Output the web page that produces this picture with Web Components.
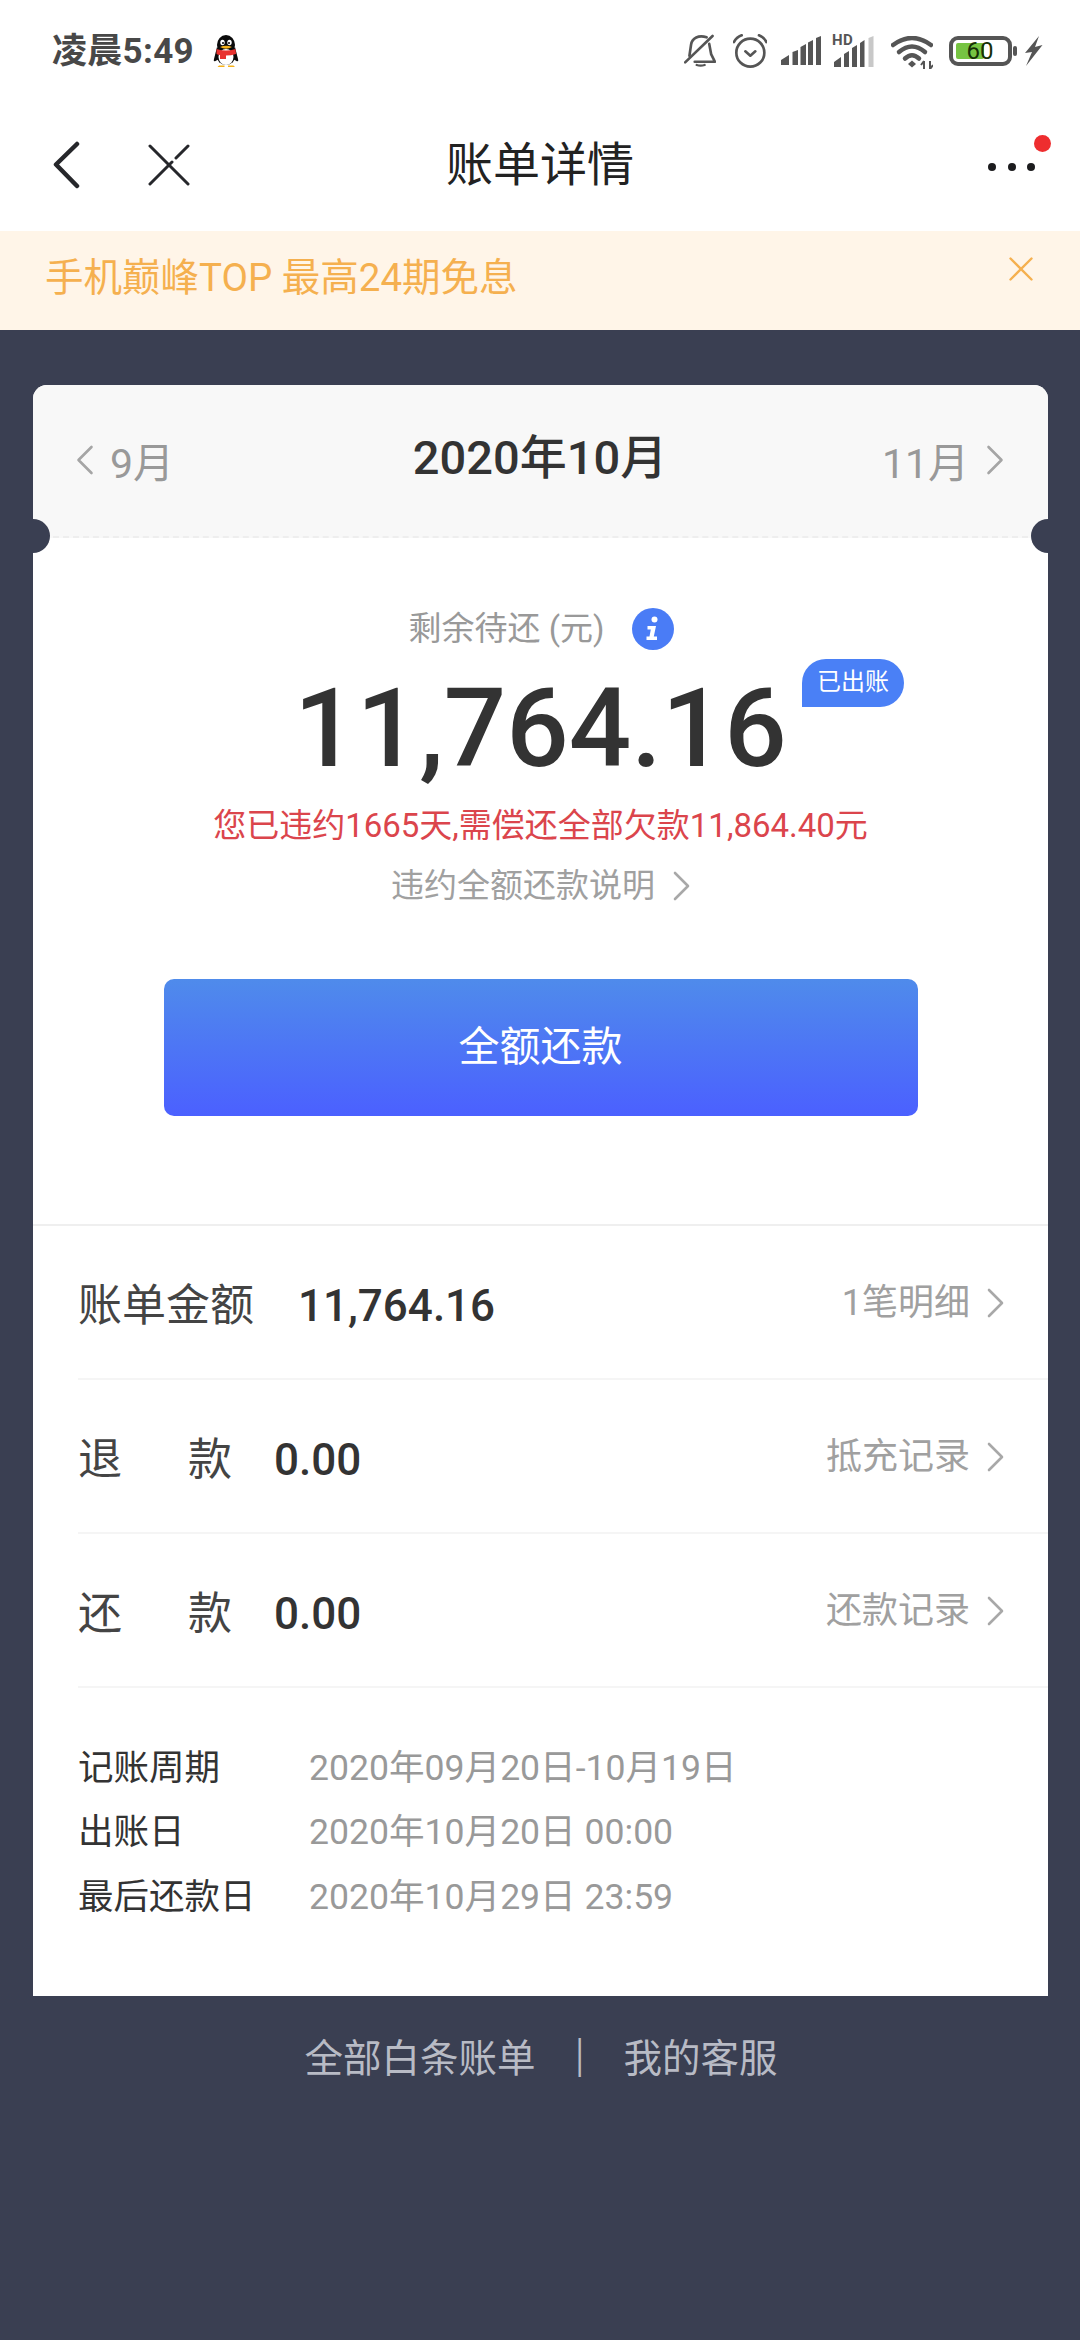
<!DOCTYPE html>
<html lang="zh-CN">
<head>
<meta charset="utf-8">
<title>账单详情</title>
<style>
html,body{margin:0;padding:0}
body{width:1080px;height:2340px;overflow:hidden;background:#3a3f52;font-family:Roboto,"Noto Sans CJK SC",sans-serif;color:#333;display:flex;flex-direction:column}
</style>
</head>
<body>
<status-bar></status-bar>
<nav-bar>账单详情</nav-bar>
<promo-banner>手机巅峰TOP 最高24期免息</promo-banner>
<bill-page>
  <bill-card>
    <month-header slot="header" prev="9月" next="11月">2020年10月</month-header>
    <amount-panel slot="summary"></amount-panel>
    <detail-row label-width="176" gap="44"><span slot="label">账单金额</span><span slot="value">11,764.16</span><span slot="link">1笔明细</span></detail-row>
    <detail-row label-width="154" gap="42"><span slot="label">退款</span><span slot="value">0.00</span><span slot="link">抵充记录</span></detail-row>
    <detail-row label-width="154" gap="42"><span slot="label">还款</span><span slot="value">0.00</span><span slot="link">还款记录</span></detail-row>
    <info-list slot="info">
      <info-row><span slot="label">记账周期</span>2020年09月20日-10月19日</info-row>
      <info-row><span slot="label">出账日</span>2020年10月20日 00:00</info-row>
      <info-row><span slot="label">最后还款日</span>2020年10月29日 23:59</info-row>
    </info-list>
  </bill-card>
  <footer-links></footer-links>
</bill-page>
<script>
function def(name, html, extra){
  const t=document.createElement('template');t.innerHTML=html;
  customElements.define(name,class extends HTMLElement{
    constructor(){super();this.attachShadow({mode:'open'}).appendChild(t.content.cloneNode(true));}
    connectedCallback(){if(extra)extra(this)}
  });
}
const CHEV=(d,w,h,c,sw)=>`<svg width="${w}" height="${h}" viewBox="0 0 17 30" style="display:block;flex:none" fill="none" stroke="${c}" stroke-width="${sw}" stroke-linecap="round" stroke-linejoin="round"><path d="${d==='l'?'M15 2 2 15 15 28':'M2 2 15 15 2 28'}"/></svg>`;

def('status-bar',`<style>
:host{display:flex;box-sizing:border-box;height:100px;background:#fff;align-items:flex-start;position:relative;color:#484848}
.time{margin:30px 0 0 52px;font-size:35px;line-height:44px;font-weight:700;letter-spacing:.3px;width:160px;white-space:nowrap}
.qq{margin:35px 0 0 1px;display:block}
.icons{margin-left:auto;margin-right:37px;display:flex;align-items:flex-start;padding-top:34px;height:36px}
svg{display:block;flex:none}
.hd{position:relative;width:42px;height:33px;margin-left:12px}
.hd b{position:absolute;left:-1px;top:-3px;font:700 15px/18px Roboto,sans-serif;color:#555;letter-spacing:.3px}
.hd svg{position:absolute;left:0;top:2px}
.bat{position:relative;width:68px;height:30px;margin:2px 0 0 16px}
.bat i{position:absolute;left:7px;top:7px;width:28px;height:16px;background:#76c442;border-radius:2px}
.bat span{position:absolute;left:16px;top:0;width:30px;text-align:center;font:400 24px/31px Roboto,sans-serif;color:#163006}
.bat svg{position:absolute;left:0;top:0}
</style>
<div class="time">凌晨5:49</div>
<svg class="qq" width="26" height="32" viewBox="0 0 26 32">
  <ellipse cx="13" cy="10" rx="9" ry="10" fill="#0b0b0b"/>
  <path d="M4 12 1 24Q0 27 2.500 26L6 24 8 18Z M22 12 25 24Q26 27 23.500 26L20 24 18 18Z" fill="#0b0b0b"/>
  <ellipse cx="13" cy="21" rx="9.500" ry="9" fill="#0b0b0b"/>
  <ellipse cx="13" cy="22" rx="7.500" ry="8" fill="#fff"/>
  <path d="M3.500 14Q13 17 22.500 14L23 19Q18 20.500 13 20.500V24H7V20Q5 19.800 3.500 19Z" fill="#e8322f"/>
  <ellipse cx="9.500" cy="7.500" rx="2.200" ry="2.800" fill="#fff"/><ellipse cx="16.500" cy="7.500" rx="2.200" ry="2.800" fill="#fff"/>
  <circle cx="10" cy="8" r="1" fill="#000"/><circle cx="16" cy="8" r="1" fill="#000"/>
  <path d="M7 12Q13 9.500 19 12Q13 15.500 7 12Z" fill="#f5b21a"/>
  <path d="M6 30.500h5.500v1.500H4.500ZM15 30.500h5.500L22 32h-7Z" fill="#f5b21a"/>
</svg>
<div class="icons">
  <svg width="32" height="33" viewBox="0 0 96 100" fill="none" stroke="#555" stroke-width="8" stroke-linecap="round" stroke-linejoin="round">
    <path d="M3 86 86 6"/>
    <path d="M16 66 21 32C24 12 44 2 68 10"/><path d="M76 30 82 62 93 84H32"/>
    <path d="M38 94Q50 98 62 94" stroke-width="7"/>
  </svg>
  <svg style="margin-left:17px" width="34" height="34" viewBox="0 0 102 102" fill="none" stroke="#555" stroke-width="8" stroke-linecap="round" stroke-linejoin="round">
    <circle cx="52" cy="56" r="42"/><path d="M37 52 52 65 67 52"/><path d="M3 24Q10 10 26 4"/><path d="M78 4Q94 10 100 24"/>
  </svg>
  <svg style="margin:2px 0 0 14px" width="40" height="29" viewBox="0 0 40 29" fill="#555">
    <path d="M0 29V24L8 19V29ZM11.500 29V16L17 14V29ZM19.500 29V11L25 8V29ZM27 29V6.500L32 4V29ZM35 29V2L40 0V29Z"/>
  </svg>
  <div class="hd"><b>HD</b>
    <svg width="42" height="31" viewBox="0 0 42 31" fill="#555">
      <path d="M1 31V26L8 21V31ZM11 31V18L16 15V31ZM19 31V12L24 9V31ZM27 31V7L31.500 4V31Z"/><path d="M35.500 31V2L40.500 0V31Z" fill="#c8c8c8"/>
    </svg>
  </div>
  <svg style="margin:2px 0 0 16px" width="42" height="33" viewBox="0 0 42 33" fill="none" stroke="#555" stroke-linecap="round">
    <path d="M2 9Q21 -5 40 9" stroke-width="4.500"/><path d="M8 16Q21 5 34 16" stroke-width="4.500"/><path d="M14 22.500Q21 16 28 22.500" stroke-width="4.500"/>
    <path d="M17 28 21 24.500 25 28 21 31.500Z" fill="#555" stroke="none"/>
    <path d="M33 25V33M33 25 30 29M39 25V33M39 33 42 29" stroke-width="2" stroke-linecap="butt"/>
  </svg>
  <div class="bat">
    <i></i><span>60</span>
    <svg width="68" height="30" viewBox="0 0 68 30" fill="none"><rect x="2" y="2" width="59" height="26" rx="7" stroke="#555" stroke-width="4"/><rect x="64" y="10" width="4" height="10" rx="2" fill="#555"/></svg>
  </div>
  <svg style="margin:2px 0 0 8px" width="18" height="30" viewBox="0 0 18 30" fill="#555"><path d="M14 0 0 17 7 16 1 30 17.500 9 10 11Z"/></svg>
</div>`);

def('nav-bar',`<style>
:host{display:grid;grid-template-columns:1fr auto 1fr;align-items:center;height:131px;background:#fff;box-sizing:border-box}
.l{display:flex;align-items:center;padding-left:52px;gap:68px;margin-top:-2px}
.t{font-size:47px;line-height:60px;color:#222;margin-top:-2px;letter-spacing:0}
.r{justify-self:end;position:relative;width:100px;height:60px;margin-top:-2px}
.r i{position:absolute;top:28px;width:8px;height:8px;border-radius:50%;background:#1c1c1e}
.r b{position:absolute;left:54px;top:0;width:17px;height:17px;border-radius:50%;background:#ee2d2f}
svg{display:block}
</style>
<div class="l">
<svg width="28" height="48" viewBox="0 0 28 48" fill="none" stroke="#26272b" stroke-width="4.500" stroke-linecap="round" stroke-linejoin="round"><path d="M25 3 4 23.500 25 45"/></svg>
<svg width="42" height="42" viewBox="0 0 42 42" fill="none" stroke="#26272b" stroke-width="3" stroke-linecap="round"><path d="M2 2 40 40"/><path d="M2 40 24 18"/><path d="M28 14 40 2"/></svg>
</div>
<div class="t"><slot></slot></div>
<div class="r"><i style="left:8px"></i><i style="left:28px"></i><i style="left:47px"></i><b></b></div>`);

def('promo-banner',`<style>
:host{display:flex;align-items:center;justify-content:space-between;height:99px;box-sizing:border-box;background:#fff5e8;padding:0 47px 0 45px;color:#f5b04f;font-size:38.500px;flex:none}
svg{display:block;margin-top:-24px}
div{margin-top:-5px;line-height:50px}
</style><div><slot></slot></div>
<svg width="24" height="24" viewBox="0 0 24 24" fill="none" stroke="#f5b04f" stroke-width="2.400" stroke-linecap="round"><path d="M1.500 1.500 22.500 22.500M22.500 1.500 1.500 22.500"/></svg>`);

def('bill-page',`<style>:host{display:flex;flex-direction:column;flex:1;padding:55px 32px 0 33px;box-sizing:border-box}</style><slot></slot>`);

def('bill-card',`<style>
:host{display:block;position:relative;height:1611px;background:#fff;border-radius:14px 14px 0 0;overflow:hidden}
.n{position:absolute;top:134px;width:34px;height:34px;border-radius:50%;background:#3a3f52;z-index:2}
</style>
<slot name="header"></slot><slot name="summary"></slot><slot></slot><slot name="info"></slot>
<i class="n" style="left:-17px"></i><i class="n" style="right:-17px"></i>`);

def('month-header',`<style>
:host{display:grid;grid-template-columns:1fr auto 1fr;align-items:center;height:153px;box-sizing:border-box;background:#f8f8f8;border-bottom:2px dashed #eeeeee;padding:0 44px 0 43px;color:#999;font-size:41px}
.s{display:flex;align-items:center;gap:16px;margin-top:-1px}
.s.e{justify-content:flex-end;gap:17px}
.m{font-size:47px;font-weight:500;color:#333;line-height:60px;margin-top:-5px}
</style>
<div class="s">${CHEV('l',18,30,'#a5a5a5',2.6)}<span id="p"></span></div>
<div class="m"><slot></slot></div>
<div class="s e"><span id="n"></span>${CHEV('r',18,30,'#a5a5a5',2.6)}</div>`,
el=>{el.shadowRoot.getElementById('p').textContent=el.getAttribute('prev');el.shadowRoot.getElementById('n').textContent=el.getAttribute('next');});

def('amount-panel',`<style>
:host{display:flex;flex-direction:column;align-items:center;height:688px;box-sizing:border-box;padding-top:67px;border-bottom:2px solid #efefef}
.lb{display:flex;align-items:center;gap:28px;height:48px;font-size:33px;color:#999;line-height:48px;margin-left:2px}
.ic{width:42px;height:42px;display:block;flex:none}
.amt{position:relative;margin-top:16px;font-size:110px;line-height:120px;font-weight:500;color:#333}
.bd{position:absolute;left:calc(100% + 15px);top:-10px;width:102px;height:48px;border-radius:24px 24px 24px 0;background:#4a80f6;color:#fff;font-size:24px;line-height:46px;text-align:center;font-weight:400}
.warn{margin-top:15px;font-size:33px;line-height:44px;color:#db454c;white-space:nowrap}
.lnk{margin-top:16px;display:flex;align-items:center;gap:18px;font-size:33px;line-height:44px;color:#a0a0a0}
.btn{margin-top:71px;width:754px;height:137px;border-radius:10px;background:linear-gradient(180deg,#4f8beb,#4b60ff);color:#fff;font-size:41px;display:flex;align-items:center;justify-content:center;padding-bottom:10px;box-sizing:border-box}
</style>
<div class="lb"><span>剩余待还 (元)</span>
<svg class="ic" viewBox="0 0 42 42"><circle cx="21" cy="21" r="21" fill="#4a7cf6"/><circle cx="22.500" cy="11.500" r="3" fill="#fff"/><path d="M15.500 18H24L21.800 28.500H25V32H14.500V28.500H17.500L18.800 21.500H15.500Z" fill="#fff"/></svg></div>
<div class="amt">11,764.16<div class="bd">已出账</div></div>
<div class="warn">您已违约1665天,需偿还全部欠款11,864.40元</div>
<div class="lnk"><span>违约全额还款说明</span>${CHEV('r',17,30,'#a8a8a8',2.6)}</div>
<div class="btn">全额还款</div>`);

def('detail-row',`<style>
:host{display:block;padding-left:45px}
.w{display:flex;align-items:center;height:152px;border-bottom:2px solid #f5f5f5;padding-right:44px}
.lb{font-size:44px;color:#444;text-align:justify;text-align-last:justify;line-height:60px;margin-top:8px}
.v{font-size:44px;font-weight:500;color:#333;line-height:60px;margin-top:8px}
.lk{margin-left:auto;display:flex;align-items:center;gap:17px;font-size:36px;color:#a0a0a0;line-height:50px;margin-top:2px}
.lk span{margin-top:0}
</style><div class="w">
<div class="lb" id="lb"><slot name="label"></slot></div>
<div class="v" id="v"><slot name="value"></slot></div>
<div class="lk"><span><slot name="link"></slot></span>${CHEV('r',17,30,'#a8a8a8',2.6)}</div>
</div>`,
el=>{el.shadowRoot.getElementById('lb').style.width=el.getAttribute('label-width')+'px';el.shadowRoot.getElementById('v').style.marginLeft=el.getAttribute('gap')+'px';});

def('info-list',`<style>:host{display:block;padding:44px 45px 0}</style><slot></slot>`);
def('info-row',`<style>
:host{display:flex;height:64.500px;align-items:center;font-size:35.600px;color:#999;white-space:nowrap}
.l{width:231px;color:#333;flex:none;font-size:35.500px}
</style><div class="l"><slot name="label"></slot></div><div><slot></slot></div>`);

def('footer-links',`<style>
:host{display:flex;justify-content:center;align-items:center;height:118px;color:#b8bbc5;font-size:38.500px;flex:none;padding-left:1px}
i{font-style:normal;width:88px;text-align:center;font-size:46px;font-weight:300;line-height:50px}
</style><span>全部白条账单</span><i>|</i><span>我的客服</span>`);
</script>
</body>
</html>
